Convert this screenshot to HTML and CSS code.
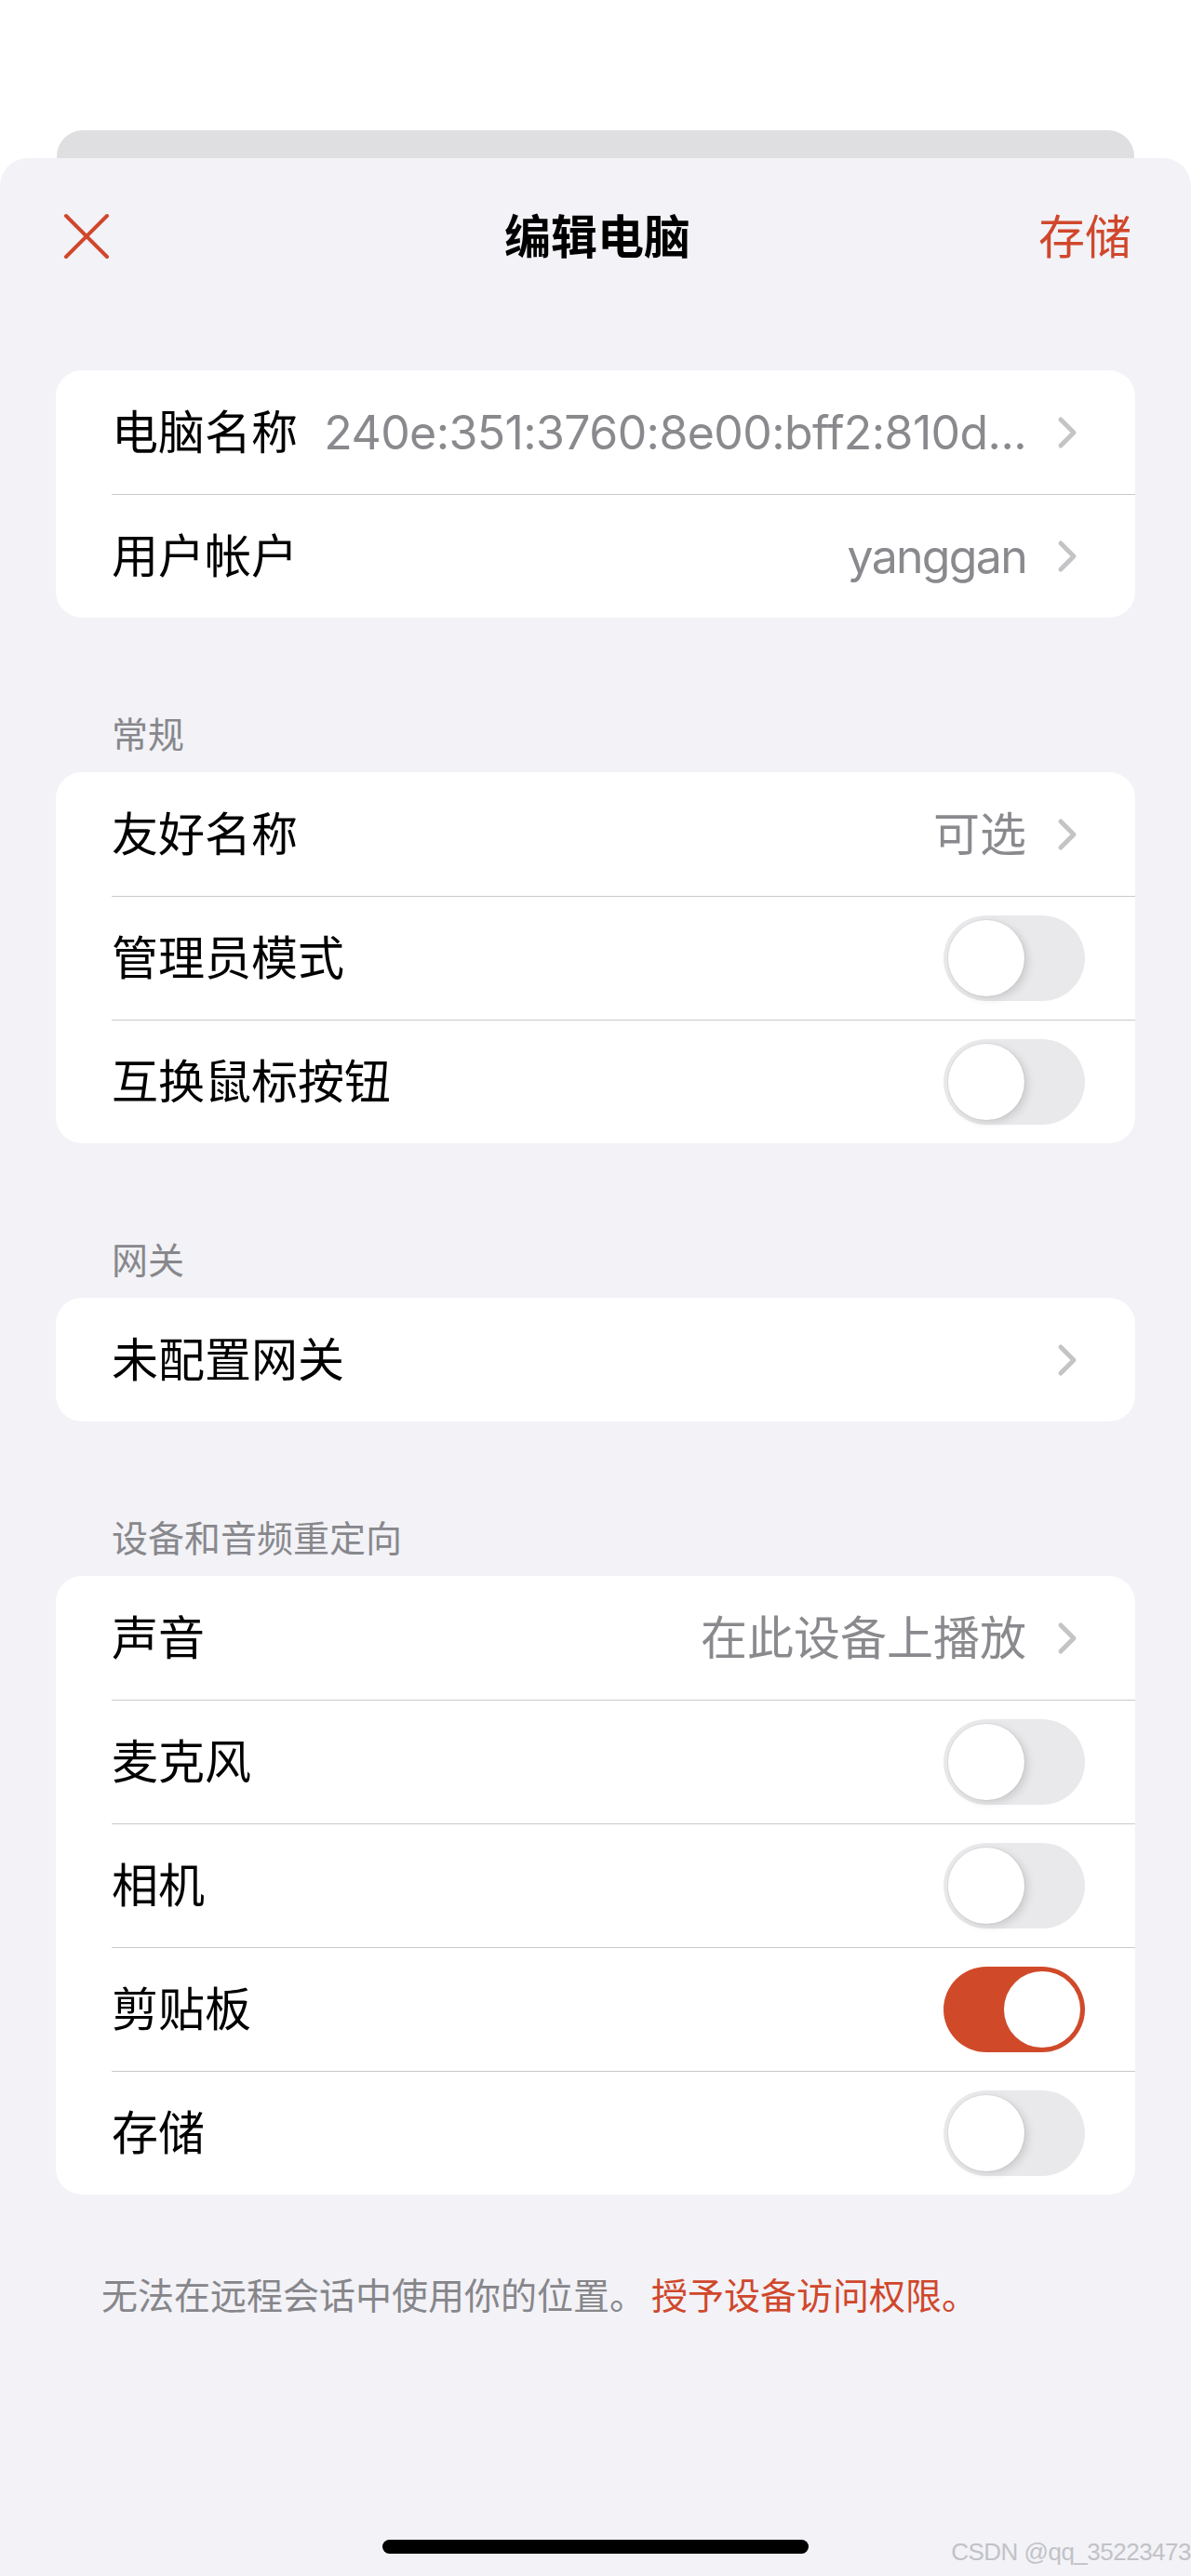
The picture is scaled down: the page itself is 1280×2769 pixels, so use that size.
FILE: index.html
```html
<!DOCTYPE html>
<html lang="zh-CN">
<head>
    <meta charset="UTF-8">
    <meta name="viewport" content="width=device-width, initial-scale=1.0">
    <title>编辑电脑</title>
    <link rel="stylesheet" href="styles.css">
</head>
<body>
    <div class="back-card"></div>

    <div class="sheet">
        <div class="header">
            <button class="close-btn" aria-label="关闭">
                <svg width="50" height="50" viewBox="0 0 50 50">
                    <path d="M3 3 L47 47 M47 3 L3 47" stroke="#d0472b" stroke-width="4" stroke-linecap="round" fill="none"/>
                </svg>
            </button>
            <h1>编辑电脑</h1>
            <button class="save-btn">存储</button>
        </div>

        <div class="group first">
            <div class="row">
                <div class="row-body link-row">
                    <span class="label">电脑名称</span>
                    <span class="value address">240e:351:3760:8e00:bff2:810d...</span>
                    <svg class="chevron" width="22" height="36" viewBox="0 0 22 36"><path d="M4 4 L18 18 L4 32"/></svg>
                </div>
            </div>
            <div class="row">
                <div class="row-body link-row">
                    <span class="label">用户帐户</span>
                    <span class="value latin">yanggan</span>
                    <svg class="chevron" width="22" height="36" viewBox="0 0 22 36"><path d="M4 4 L18 18 L4 32"/></svg>
                </div>
            </div>
        </div>

        <div class="group-title">常规</div>
        <div class="group">
            <div class="row">
                <div class="row-body link-row">
                    <span class="label">友好名称</span>
                    <span class="value">可选</span>
                    <svg class="chevron" width="22" height="36" viewBox="0 0 22 36"><path d="M4 4 L18 18 L4 32"/></svg>
                </div>
            </div>
            <div class="row">
                <div class="row-body">
                    <span class="label">管理员模式</span>
                    <span class="switch"></span>
                </div>
            </div>
            <div class="row">
                <div class="row-body">
                    <span class="label">互换鼠标按钮</span>
                    <span class="switch"></span>
                </div>
            </div>
        </div>

        <div class="group-title">网关</div>
        <div class="group">
            <div class="row">
                <div class="row-body link-row">
                    <span class="label">未配置网关</span>
                    <span class="value"></span>
                    <svg class="chevron" width="22" height="36" viewBox="0 0 22 36"><path d="M4 4 L18 18 L4 32"/></svg>
                </div>
            </div>
        </div>

        <div class="group-title">设备和音频重定向</div>
        <div class="group">
            <div class="row">
                <div class="row-body link-row">
                    <span class="label">声音</span>
                    <span class="value">在此设备上播放</span>
                    <svg class="chevron" width="22" height="36" viewBox="0 0 22 36"><path d="M4 4 L18 18 L4 32"/></svg>
                </div>
            </div>
            <div class="row">
                <div class="row-body">
                    <span class="label">麦克风</span>
                    <span class="switch"></span>
                </div>
            </div>
            <div class="row">
                <div class="row-body">
                    <span class="label">相机</span>
                    <span class="switch"></span>
                </div>
            </div>
            <div class="row">
                <div class="row-body">
                    <span class="label">剪贴板</span>
                    <span class="switch on"></span>
                </div>
            </div>
            <div class="row">
                <div class="row-body">
                    <span class="label">存储</span>
                    <span class="switch"></span>
                </div>
            </div>
        </div>

        <p class="footnote">无法在远程会话中使用你的位置。<span class="accent">授予设备访问权限。</span></p>

        <div class="home-bar"></div>
    </div>

    <div class="watermark">CSDN @qq_35223473</div>
</body>
</html>
```

FILE: styles.css
```css
body {
    margin: 0;
    padding-top: 140px;
    background-color: #fff;
    font-family: Inter, "Noto Sans CJK SC", sans-serif;
    color: #000;
    position: relative;
}

.back-card {
    height: 30px;
    margin: 0 61px;
    background-color: #dfdfe1;
    border-radius: 28px 28px 0 0;
}

.sheet {
    display: flex;
    flex-direction: column;
    min-height: 2599px;
    background-color: #f2f2f7;
    border-radius: 30px 30px 0 0;
}

.header {
    display: grid;
    grid-template-columns: 1fr auto 1fr;
    align-items: center;
    box-sizing: border-box;
    height: 168px;
    padding: 0 64px 6px 68px;
}

.header h1 {
    margin: 0;
    font-family: "Noto Sans CJK SC", sans-serif;
    font-size: 50px;
    font-weight: 700;
    line-height: 1.2;
}

.close-btn, .save-btn {
    padding: 0;
    border: none;
    background: none;
    cursor: pointer;
}

.close-btn {
    justify-self: start;
    display: flex;
    margin-top: 6px;
}

.save-btn {
    justify-self: end;
    font-family: "Noto Sans CJK SC", sans-serif;
    font-size: 50px;
    line-height: 1.2;
    color: #d0472b;
}

.group {
    margin: 0 60px;
    background-color: #fff;
    border-radius: 28px;
    overflow: hidden;
}

.group.first {
    margin-top: 60px;
}

.group-title {
    margin: 100px 60px 19px;
    padding-left: 60px;
    font-family: "Noto Sans CJK SC", sans-serif;
    font-size: 39px;
    line-height: 47px;
    color: #88888c;
}

.row {
    padding-left: 60px;
}

.row-body {
    display: flex;
    align-items: center;
    box-sizing: border-box;
    height: 133px;
    padding-right: 54px;
}

.row + .row .row-body {
    border-top: 1px solid #c9c9cc;
}

.row-body.link-row {
    padding-right: 62px;
}

.label {
    flex-shrink: 0;
    font-size: 50px;
    line-height: 1.2;
}

.value {
    flex: 1;
    min-width: 0;
    margin: 0 33px 0 18px;
    text-align: right;
    white-space: nowrap;
    font-size: 50px;
    line-height: 1.2;
    color: #8a8a8e;
}

.value.latin {
    letter-spacing: -1.7px;
}

.value.address {
    letter-spacing: -0.6px;
}

.chevron {
    flex-shrink: 0;
}

.chevron path {
    fill: none;
    stroke: #c4c4c7;
    stroke-width: 5;
    stroke-linecap: round;
    stroke-linejoin: round;
}

.switch {
    position: relative;
    flex-shrink: 0;
    margin-left: auto;
    width: 152px;
    height: 92px;
    border-radius: 46px;
    background-color: #e9e9eb;
}

.switch::after {
    content: "";
    position: absolute;
    top: 5px;
    left: 5px;
    width: 82px;
    height: 82px;
    border-radius: 50%;
    background-color: #fff;
    box-shadow: 0 0 0 1px rgba(0, 0, 0, 0.05), 4px 3px 8px rgba(0, 0, 0, 0.12);
}

.switch.on {
    background-color: #d04a2a;
}

.switch.on::after {
    left: 65px;
    box-shadow: none;
}

.footnote {
    margin: 83px 60px 0;
    padding-left: 49px;
    font-family: "Noto Sans CJK SC", sans-serif;
    font-size: 39px;
    line-height: 47px;
    color: #86868a;
}

.footnote .accent {
    margin-left: 6px;
    color: #d0472b;
}

.home-bar {
    width: 458px;
    height: 15px;
    margin: auto auto 24px;
    border-radius: 8px;
    background-color: #000;
}

.watermark {
    position: absolute;
    right: 0;
    bottom: 10px;
    font-family: "Liberation Sans", sans-serif;
    font-size: 26px;
    color: #c2c2c6;
    letter-spacing: -0.5px;
}
```
